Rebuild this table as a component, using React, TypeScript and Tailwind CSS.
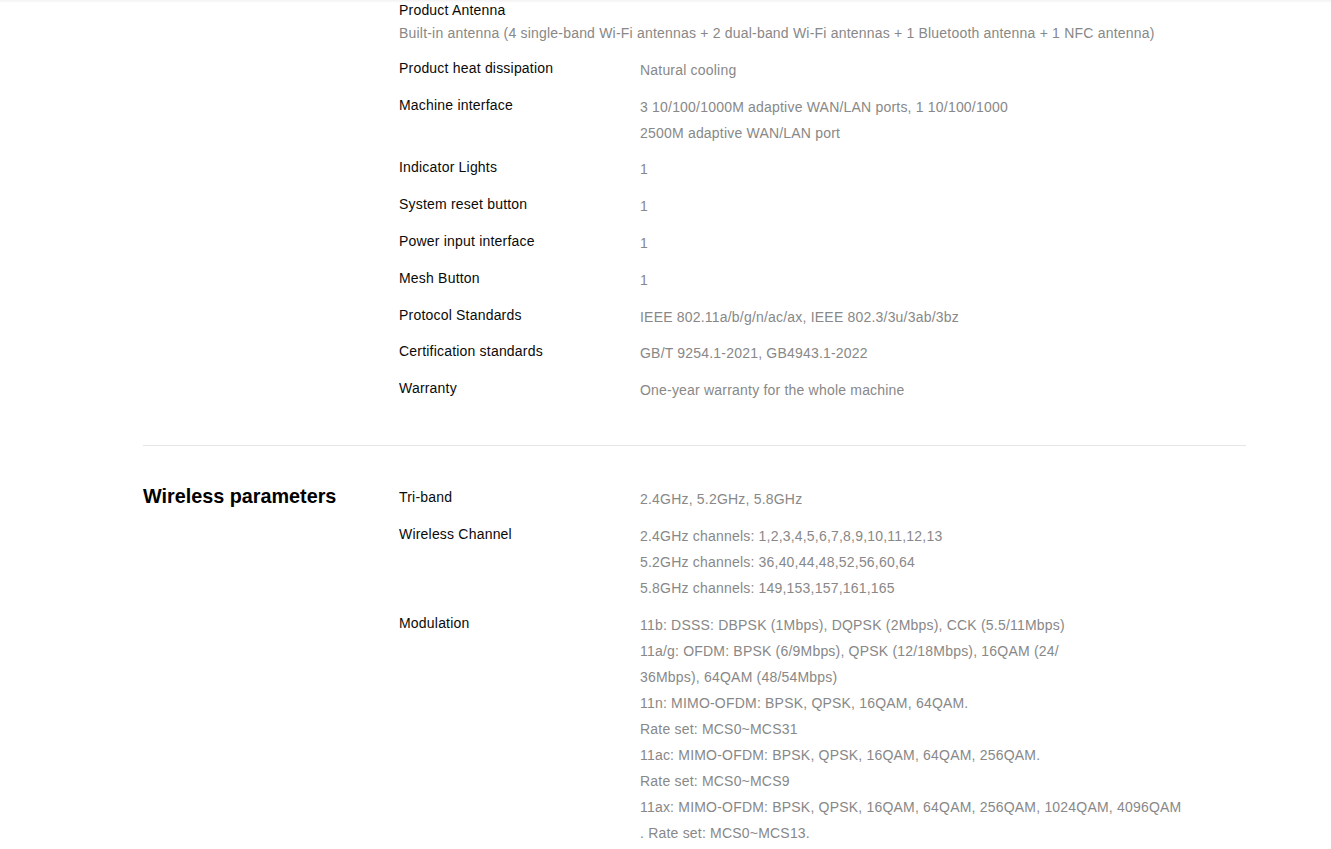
import React from "react";

type Spec = { label: string; lines: string[] };

const HARDWARE: Spec[] = [
  { label: "Product heat dissipation", lines: ["Natural cooling"] },
  {
    label: "Machine interface",
    lines: ["3 10/100/1000M adaptive WAN/LAN ports, 1 10/100/1000", "2500M adaptive WAN/LAN port"],
  },
  { label: "Indicator Lights", lines: ["1"] },
  { label: "System reset button", lines: ["1"] },
  { label: "Power input interface", lines: ["1"] },
  { label: "Mesh Button", lines: ["1"] },
  { label: "Protocol Standards", lines: ["IEEE 802.11a/b/g/n/ac/ax, IEEE 802.3/3u/3ab/3bz"] },
  { label: "Certification standards", lines: ["GB/T 9254.1-2021, GB4943.1-2022"] },
  { label: "Warranty", lines: ["One-year warranty for the whole machine"] },
];

const WIRELESS: Spec[] = [
  { label: "Tri-band", lines: ["2.4GHz, 5.2GHz, 5.8GHz"] },
  {
    label: "Wireless Channel",
    lines: [
      "2.4GHz channels: 1,2,3,4,5,6,7,8,9,10,11,12,13",
      "5.2GHz channels: 36,40,44,48,52,56,60,64",
      "5.8GHz channels: 149,153,157,161,165",
    ],
  },
  {
    label: "Modulation",
    lines: [
      "11b: DSSS: DBPSK (1Mbps), DQPSK (2Mbps), CCK (5.5/11Mbps)",
      "11a/g: OFDM: BPSK (6/9Mbps), QPSK (12/18Mbps), 16QAM (24/",
      "36Mbps), 64QAM (48/54Mbps)",
      "11n: MIMO-OFDM: BPSK, QPSK, 16QAM, 64QAM.",
      "Rate set: MCS0~MCS31",
      "11ac: MIMO-OFDM: BPSK, QPSK, 16QAM, 64QAM, 256QAM.",
      "Rate set: MCS0~MCS9",
      "11ax: MIMO-OFDM: BPSK, QPSK, 16QAM, 64QAM, 256QAM, 1024QAM, 4096QAM",
      ". Rate set: MCS0~MCS13.",
    ],
  },
];

function SpecRow({ spec }: { spec: Spec }) {
  return (
    <div className="flex items-start">
      <div className="w-[241px] shrink-0 text-[14px] leading-[22px] tracking-[0.2px] text-[#0a0a0a]">
        {spec.label}
      </div>
      <div className="flex-1 text-[14px] leading-[26px] tracking-[0.2px] text-[#888]">
        {spec.lines.map((line) => (
          <div key={line} className="whitespace-nowrap">
            {line}
          </div>
        ))}
      </div>
    </div>
  );
}

export default function App() {
  return (
    <div className="min-h-screen w-full bg-white font-['Liberation_Sans',Arial,sans-serif]">
      {/* faint header shadow at the top edge */}
      <div className="fixed inset-x-0 top-0 h-[3px] bg-gradient-to-b from-[#f2f2f2] to-white" />

      <div className="ml-[143px] w-[1103px]">
        {/* ── Hardware section (continued) ── */}
        <div className="flex">
          <div className="w-[256px] shrink-0" />
          <div className="flex flex-1 flex-col gap-[10.8px]">
            <div>
              <div className="text-[14px] leading-[20px] tracking-[0.2px] text-[#0a0a0a]">Product Antenna</div>
              <div className="whitespace-nowrap text-[14px] leading-[26px] tracking-[0.2px] text-[#888]">
                Built-in antenna (4 single-band Wi-Fi antennas + 2 dual-band Wi-Fi antennas + 1 Bluetooth
                antenna + 1 NFC antenna)
              </div>
            </div>
            {HARDWARE.map((s) => (
              <SpecRow key={s.label} spec={s} />
            ))}
          </div>
        </div>

        <div className="mt-[42px] h-px bg-[#e6e6e6]" />

        {/* ── Wireless parameters ── */}
        <div className="flex pt-[40px]">
          <div className="w-[256px] shrink-0">
            <h2 className="text-[19.8px] font-bold leading-[20px] text-black">Wireless parameters</h2>
          </div>
          <div className="flex flex-1 flex-col gap-[11px]">
            {WIRELESS.map((s) => (
              <SpecRow key={s.label} spec={s} />
            ))}
          </div>
        </div>
      </div>
    </div>
  );
}
